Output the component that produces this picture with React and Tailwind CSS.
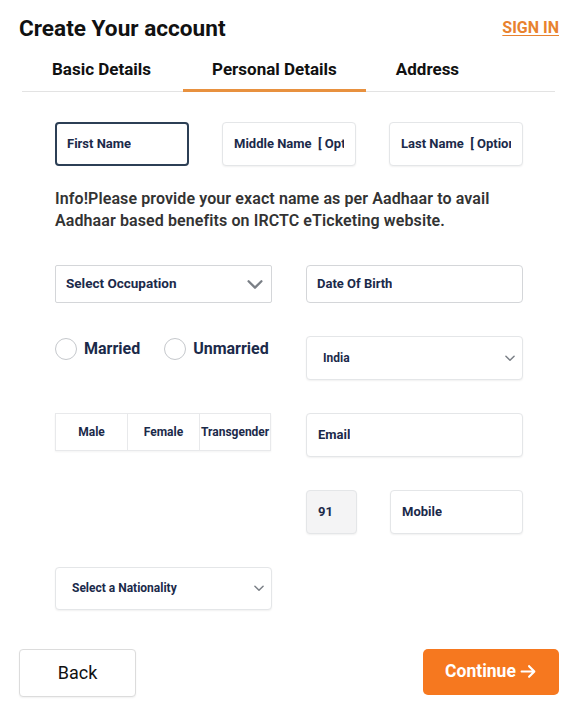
const navy = 'text-[#1b2a4a]'

const Field = ({ label, active, className = '', h = 'h-[44px]' }) => (
  <div
    className={`${h} flex items-center rounded-[4px] bg-white text-[13px] font-bold ${navy} ${
      active ? 'border-2 border-[#2c3f55] px-[10px]' : 'border border-[#e4e6e8] px-[11px] shadow-[0_1px_2px_rgba(0,0,0,0.06)]'
    } ${className}`}
  >
    <span className="block overflow-hidden whitespace-pre">{label}</span>
  </div>
)

const Chevron = ({ size = 20, stroke = 2.5 }) => (
  <svg width={size} height={size} viewBox="0 0 24 24" fill="none" stroke="#7a7f86" strokeWidth={stroke} strokeLinecap="round" strokeLinejoin="round">
    <path d="M5 9l7 7 7-7" />
  </svg>
)

const Radio = ({ label }) => (
  <label className="flex items-center gap-[7px]">
    <span className="h-[22px] w-[22px] rounded-full border border-[#c5c8cc] bg-white" />
    <span className={`text-[16px] font-bold ${navy}`}>{label}</span>
  </label>
)

export default function App() {
  return (
    <div className="h-[723px] w-full overflow-hidden bg-white font-['Roboto',sans-serif] text-black">
      <div className="flex items-start justify-between pl-[19px] pr-[16px] pt-[15px]">
        <h1 className="text-[22.6px] font-bold leading-[28px] text-[#111]">Create Your account</h1>
        <a className="mt-[1px] text-[16px] font-bold text-[#e8822f] underline underline-offset-2">SIGN IN</a>
      </div>

      <div className="ml-[22px] mr-[20px] mt-[14px] flex border-b border-[#e3e3e3]">
        <div className="pb-[8px] pl-[30px] pr-[32px] text-[17px] font-bold text-[#111]">Basic Details</div>
        <div className="-mb-px border-b-[3px] border-[#e8913f] px-[29px] pb-[6px] text-[17px] font-bold text-[#111]">
          Personal Details
        </div>
        <div className="px-[30px] pb-[8px] text-[17px] font-bold text-[#111]">Address</div>
      </div>

      <div className="pl-[55px] pr-[52px] pt-[30px]">
        <div className="grid grid-cols-3 gap-x-[33px]">
          <Field label="First Name" active />
          <Field label="Middle Name  [ Optional ]" />
          <Field label="Last Name  [ Optional ]" />
        </div>

        <p className="mt-[22px] text-[16px] font-semibold leading-[22px] tracking-[0.1px] text-[#333]">
          Info!Please provide your exact name as per Aadhaar to avail Aadhaar based benefits on IRCTC eTicketing website.
        </p>

        <div className="mt-[33px] grid grid-cols-2 items-start gap-x-[34px] gap-y-[33px]">
          <div className={`flex h-[38px] items-center justify-between rounded-[2px] border border-[#d4d6d9] bg-white pl-[10px] pr-[5px] text-[13.5px] font-bold ${navy}`}>
            Select Occupation
            <Chevron size={22} stroke={2.5} />
          </div>
          <Field label="Date Of Birth" h="h-[38px]" className="!px-[10px] !border-[#d4d6d9] !shadow-none rounded-[2px]" />

          <div className="flex items-center gap-[24px] pt-[1px]">
            <Radio label="Married" />
            <Radio label="Unmarried" />
          </div>
          <div className={`flex h-[44px] items-center justify-between rounded-[4px] border border-[#e4e6e8] bg-white pl-[16px] pr-[5px] text-[12px] font-bold shadow-[0_1px_2px_rgba(0,0,0,0.06)] ${navy}`}>
            India
            <Chevron size={14} stroke={2.5} />
          </div>

          <div className="flex h-[38px] w-[216px] border border-[#e8e9eb] text-[12px] font-bold shadow-[0_1px_2px_rgba(0,0,0,0.05)]">
            <div className={`flex w-[72px] items-center justify-center border-r border-[#e8e9eb] ${navy}`}>Male</div>
            <div className={`flex w-[72px] items-center justify-center border-r border-[#e8e9eb] ${navy}`}>Female</div>
            <div className={`flex flex-1 items-center overflow-hidden whitespace-nowrap pl-[1px] ${navy}`}>Transgender</div>
          </div>
          <Field label="Email" />

          <div />
          <div className="flex gap-[33px]">
            <Field label="91" className="w-[51px] !bg-[#f4f4f5]" />
            <Field label="Mobile" className="flex-1" />
          </div>

          <div className={`flex h-[43px] items-center justify-between rounded-[4px] border border-[#e4e6e8] bg-white pl-[16px] pr-[5px] text-[12px] font-bold shadow-[0_1px_2px_rgba(0,0,0,0.06)] ${navy}`}>
            Select a Nationality
            <Chevron size={14} stroke={2.5} />
          </div>
          <div />
        </div>
      </div>

      <div className="mt-[39px] flex items-start justify-between pl-[19px] pr-[16px]">
        <button className="h-[48px] w-[117px] rounded-[4px] border border-[#dcdcdc] bg-white text-[18px] text-[#111] shadow-[0_1px_2px_rgba(0,0,0,0.06)]">
          Back
        </button>
        <button className="flex h-[46px] w-[136px] items-center justify-center gap-[3px] rounded-[5px] bg-[#f6781f] text-[17.5px] font-bold text-white">
          Continue
          <svg width="18" height="17" viewBox="0 0 448 512" fill="white">
            <path d="M438.6 278.6c12.5-12.5 12.5-32.8 0-45.3l-160-160c-12.5-12.5-32.8-12.5-45.3 0s-12.5 32.8 0 45.3L338.8 224H32c-17.7 0-32 14.3-32 32s14.3 32 32 32h306.7L233.4 393.4c-12.5 12.5-12.5 32.8 0 45.3s32.8 12.5 45.3 0l160-160z" />
          </svg>
        </button>
      </div>
    </div>
  )
}
